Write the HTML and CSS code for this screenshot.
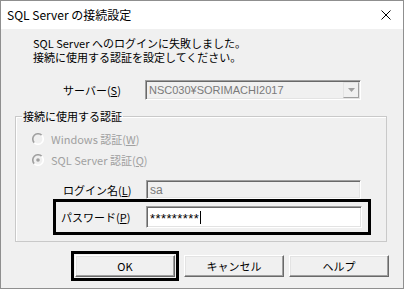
FILE: index.html
```html
<!DOCTYPE html>
<html lang="ja">
<head>
<meta charset="utf-8">
<link rel="stylesheet" href="styles.css">
</head>
<body>
<div class="window">
  <div class="titlebar">
    <span class="title">SQL Server の接続設定</span>
    <svg class="close" width="10" height="10" viewBox="0 0 10 10"><path d="M0.5 0.5 L9.5 9.5 M9.5 0.5 L0.5 9.5" stroke="#000" stroke-width="1" fill="none"/></svg>
  </div>
  <div class="content">
    <p class="message"><span class="line">SQL Server へのログインに失敗しました。</span><span class="line">接続に使用する認証を設定してください。</span></p>
    <div class="row server-row">
      <span class="label">サーバー(<u>S</u>)</span>
      <div class="combo">
        <span class="combo-text">NSC030¥SORIMACHI2017</span>
        <span class="combo-btn"><svg width="7" height="4" viewBox="0 0 7 4"><path d="M0 0 H7 L3.5 4 Z" fill="#a0a0a0"/></svg></span>
      </div>
    </div>
    <fieldset class="group">
      <legend>接続に使用する認証</legend>
      <div class="radio">
        <svg width="12" height="12" viewBox="0 0 12 12"><circle cx="6" cy="6" r="5" fill="#f0f0f0"/><path d="M2.3 9.7 A5.2 5.2 0 0 1 9.7 2.3" stroke="#a0a0a0" stroke-width="1.6" fill="none"/><path d="M9.7 2.3 A5.2 5.2 0 0 1 2.3 9.7" stroke="#fff" stroke-width="1.6" fill="none"/></svg>
        <span>Windows 認証(<u>W</u>)</span>
      </div>
      <div class="radio">
        <svg width="12" height="12" viewBox="0 0 12 12"><circle cx="6" cy="6" r="5" fill="#f0f0f0"/><path d="M2.3 9.7 A5.2 5.2 0 0 1 9.7 2.3" stroke="#a0a0a0" stroke-width="1.6" fill="none"/><path d="M9.7 2.3 A5.2 5.2 0 0 1 2.3 9.7" stroke="#fff" stroke-width="1.6" fill="none"/><circle cx="6" cy="6" r="1.8" fill="#a0a0a0"/></svg>
        <span>SQL Server 認証(<u>Q</u>)</span>
      </div>
      <div class="row login-row">
        <span class="label">ログイン名(<u>L</u>)</span>
        <div class="field disabled">sa</div>
      </div>
      <div class="row pass-row">
        <span class="label">パスワード(<u>P</u>)</span>
        <div class="field pass">*********<span class="caret"></span></div>
      </div>
    </fieldset>
    <div class="buttons">
      <div class="default-ring"><button class="btn">OK</button></div>
      <button class="btn">キャンセル</button>
      <button class="btn">ヘルプ</button>
    </div>
  </div>
</div>
</body>
</html>
```

FILE: styles.css
```css
* { box-sizing: border-box; }
body {
  margin: 0;
  background: #fff;
  font-family: "Noto Sans CJK JP", sans-serif;
  font-size: 11px;
  color: #000;
}
.window {
  width: 404px;
  height: 289px;
  border: 1px solid #8f8f8f;
  background: #f0f0f0;
  display: flex;
  flex-direction: column;
}
.titlebar {
  height: 28px;
  flex: none;
  background: #fff;
  display: flex;
  align-items: center;
  justify-content: space-between;
  padding: 0 12px 0 6px;
}
.title { line-height: 14px; font-size: 12px; }
.content { flex: 1; }
.message {
  margin: 8px 0 0 32px;
  display: flex;
  flex-direction: column;
}
.message .line {
  height: 13px;
  line-height: 13px;
  font-size: 11px;
}
.message .line + .line { margin-top: 1px; }
.row {
  display: flex;
  align-items: center;
}
.label { flex: none; line-height: 14px; }
.server-row { margin-top: 16px; padding-left: 62px; }
.server-row .label { width: 82px; }
.combo {
  width: 216px;
  height: 20px;
  display: flex;
  align-items: center;
  justify-content: space-between;
  border-top: 1px solid #a0a0a0;
  border-left: 1px solid #a0a0a0;
  border-bottom: 1px solid #fff;
  border-right: 1px solid #fff;
  box-shadow: inset 1px 1px 0 #696969, inset -1px -1px 0 #e3e3e3;
  padding: 1px 1px 1px 3px;
  color: #7a7a7a;
  font-family: "Liberation Sans", sans-serif;
  font-size: 11px;
}
.combo-btn {
  width: 16px;
  height: 16px;
  display: flex;
  align-items: center;
  justify-content: center;
  border-top: 1px solid #e3e3e3;
  border-left: 1px solid #e3e3e3;
  border-bottom: 1px solid #a0a0a0;
  border-right: 1px solid #a0a0a0;
  background: #f0f0f0;
}
.group {
  margin: 9px 16px 0 14px;
  padding: 0 0 6px 0;
  border: 1px solid #c9c9c9;
  box-shadow: inset 1px 1px 0 #fff;
}
.group legend {
  margin-left: 6px;
  padding: 0 1px;
  line-height: 14px;
}
.radio {
  display: flex;
  align-items: center;
  height: 18px;
  padding-left: 16px;
  gap: 7px;
  color: #a0a0a0;
  line-height: 14px;
}
.radio:first-of-type { margin-top: 7px; }
.radio + .radio { margin-top: 3px; }
.login-row { margin-top: 11px; padding-left: 47px; }
.login-row .label { width: 83px; }
.field {
  height: 19px;
  border-top: 1px solid #a0a0a0;
  border-left: 1px solid #a0a0a0;
  border-bottom: 1px solid #fff;
  border-right: 1px solid #fff;
  box-shadow: inset 1px 1px 0 #696969, inset -1px -1px 0 #e3e3e3;
  padding: 0 3px;
  display: flex;
  align-items: center;
  font-family: "Liberation Sans", sans-serif;
  font-size: 12px;
}
.login-row .field { width: 215px; color: #7a7a7a; }
.pass-row {
  margin-left: 37px;
  width: 318px;
  border: 3px solid #000;
  padding: 4px 6px 4px 5px;
}
.pass-row .label { width: 85px; }
.field.pass {
  width: 216px;
  height: 22px;
  background: #fff;
  font-size: 13px;
  letter-spacing: 0.4px;
  padding-top: 3px;
}
.caret {
  display: inline-block;
  width: 1px;
  height: 13px;
  background: #000;
  margin-left: 1px;
  margin-top: -3px;
}
.buttons {
  display: flex;
  align-items: center;
  gap: 5px;
  margin: 9px 0 0 70px;
}
.default-ring {
  border: 3px solid #000;
  padding: 1px;
}
.btn {
  width: 100px;
  height: 22px;
  margin: 0;
  background: #f0f0f0;
  border-top: 1px solid #fff;
  border-left: 1px solid #fff;
  border-bottom: 1px solid #696969;
  border-right: 1px solid #696969;
  box-shadow: inset -1px -1px 0 #a0a0a0, inset 1px 1px 0 #e3e3e3;
  font-family: "Noto Sans CJK JP", sans-serif;
  font-size: 11px;
  color: #000;
  padding: 0;
  line-height: 14px;
}
u { text-decoration: underline; text-underline-offset: 1px; }
```
